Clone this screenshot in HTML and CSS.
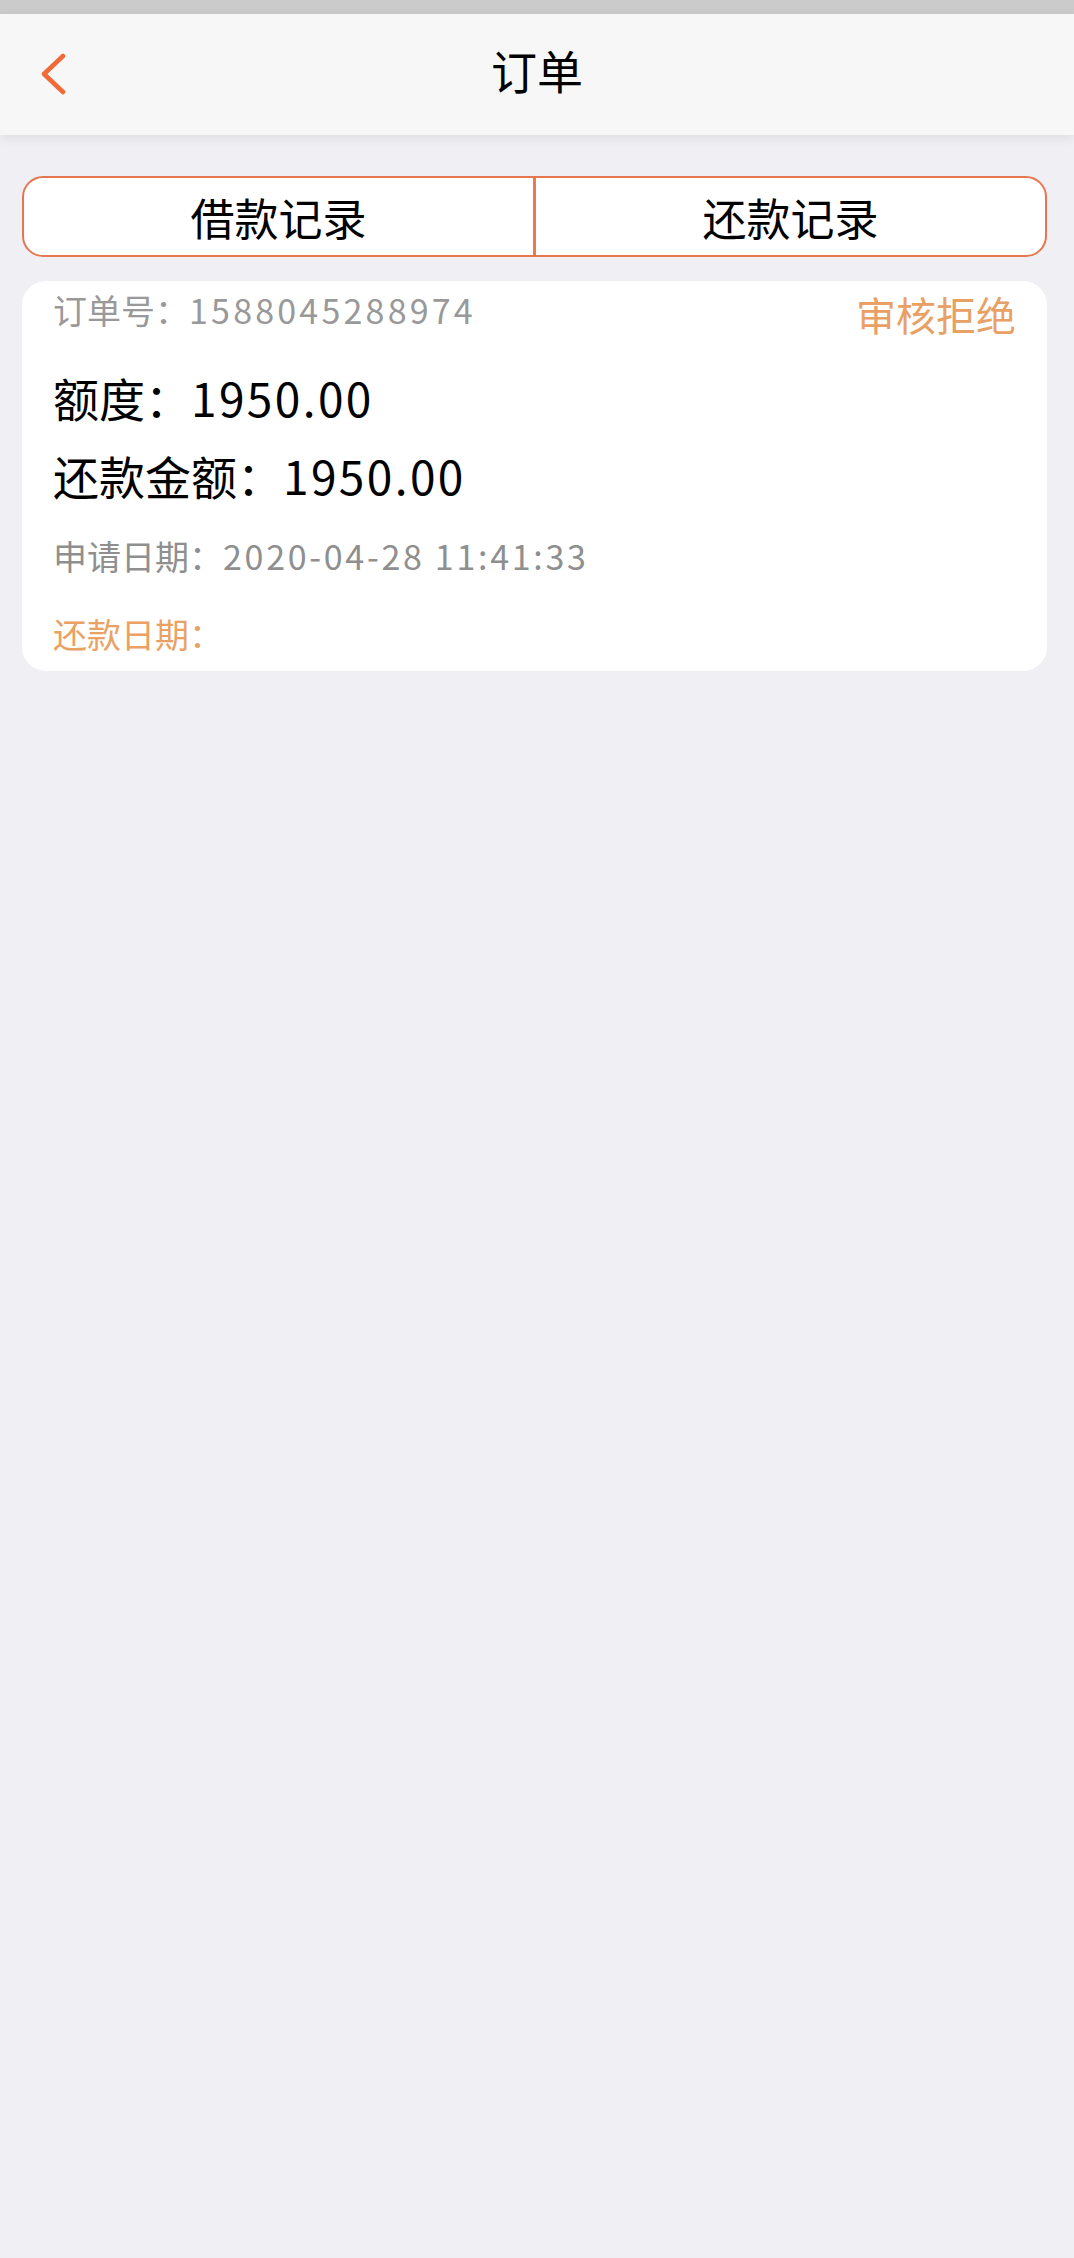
FILE: index.html
```html
<!DOCTYPE html>
<html lang="zh-CN">
<head>
    <meta charset="UTF-8">
    <meta name="viewport" content="width=device-width, initial-scale=1.0">
    <title>订单</title>
    <link rel="stylesheet" href="styles.css">
</head>
<body>

<div class="status-strip"></div>

<header class="nav">
    <a class="nav-back" href="#">
        <svg width="28" height="44" viewBox="0 0 28 44">
            <polyline points="23,3 4,21 23,39" fill="none" stroke="#f06b37" stroke-width="4.5" stroke-linecap="round" stroke-linejoin="round"/>
        </svg>
    </a>
    <h1 class="nav-title">订单</h1>
    <span></span>
</header>

<main class="page">
    <div class="tabs">
        <button class="tab">借款记录</button>
        <button class="tab">还款记录</button>
    </div>

    <div class="order-card">
        <div class="order-head">
            <span class="order-no">订单号：<span class="num">1588045288974</span></span>
            <span class="order-status">审核拒绝</span>
        </div>
        <div class="order-amount">额度：<span class="num">1950.00</span></div>
        <div class="order-amount second">还款金额：<span class="num">1950.00</span></div>
        <div class="order-date">申请日期：<span class="num">2020-04-28 11:41:33</span></div>
        <div class="order-repay">还款日期：</div>
    </div>
</main>

</body>
</html>
```

FILE: styles.css
```css
body {
    margin: 0;
    min-height: 2258px;
    background: #efeff4;
    font-family: "Noto Sans CJK SC", sans-serif;
}
.status-strip {
    height: 14px;
    background: #cbcbcb;
}
.nav {
    position: relative;
    z-index: 1;
    height: 121px;
    box-sizing: border-box;
    padding-bottom: 12px;
    display: grid;
    grid-template-columns: 1fr auto 1fr;
    align-items: center;
    background: #f7f7f7;
    box-shadow: 0 3px 10px rgba(0, 0, 0, 0.08);
}
.nav-back {
    display: flex;
    padding-left: 40px;
    padding-top: 12px;
}
.nav-title {
    margin: 0;
    font-size: 46px;
    font-weight: 400;
    line-height: 1;
    color: #000;
}
.page {
    padding: 41px 27px 0 22px;
}
.tabs {
    display: flex;
    height: 81px;
    box-sizing: border-box;
    border: 2px solid #e5764f;
    border-radius: 21px;
    background: #fff;
    overflow: hidden;
}
.tab {
    flex: 1;
    padding: 0;
    border: 0;
    background: none;
    font-family: inherit;
    font-size: 44px;
    color: #000;
}
.tab + .tab {
    border-left: 3px solid #ee7a4c;
}
.order-card {
    margin-top: 24px;
    padding: 7px 31px 15px 31px;
    background: #fff;
    border-radius: 24px;
}
.order-head {
    display: flex;
    justify-content: space-between;
    align-items: flex-start;
    line-height: 44px;
}
.order-no {
    font-size: 34px;
    color: #999;
}
.order-no .num {
    letter-spacing: 3.2px;
}
.order-status {
    margin-top: 4px;
    font-size: 40px;
    color: #e9a064;
}
.order-amount {
    margin-top: 31px;
    font-size: 46px;
    line-height: 60px;
    color: #000;
}
.order-amount .num {
    letter-spacing: 2.4px;
}
.order-amount.second {
    margin-top: 18px;
}
.order-date {
    margin-top: 29px;
    font-size: 34px;
    line-height: 44px;
    color: #8f8f8f;
}
.order-date .num {
    letter-spacing: 2.7px;
}
.order-repay {
    margin-top: 34px;
    font-size: 34px;
    line-height: 44px;
    color: #eaa264;
}
```
